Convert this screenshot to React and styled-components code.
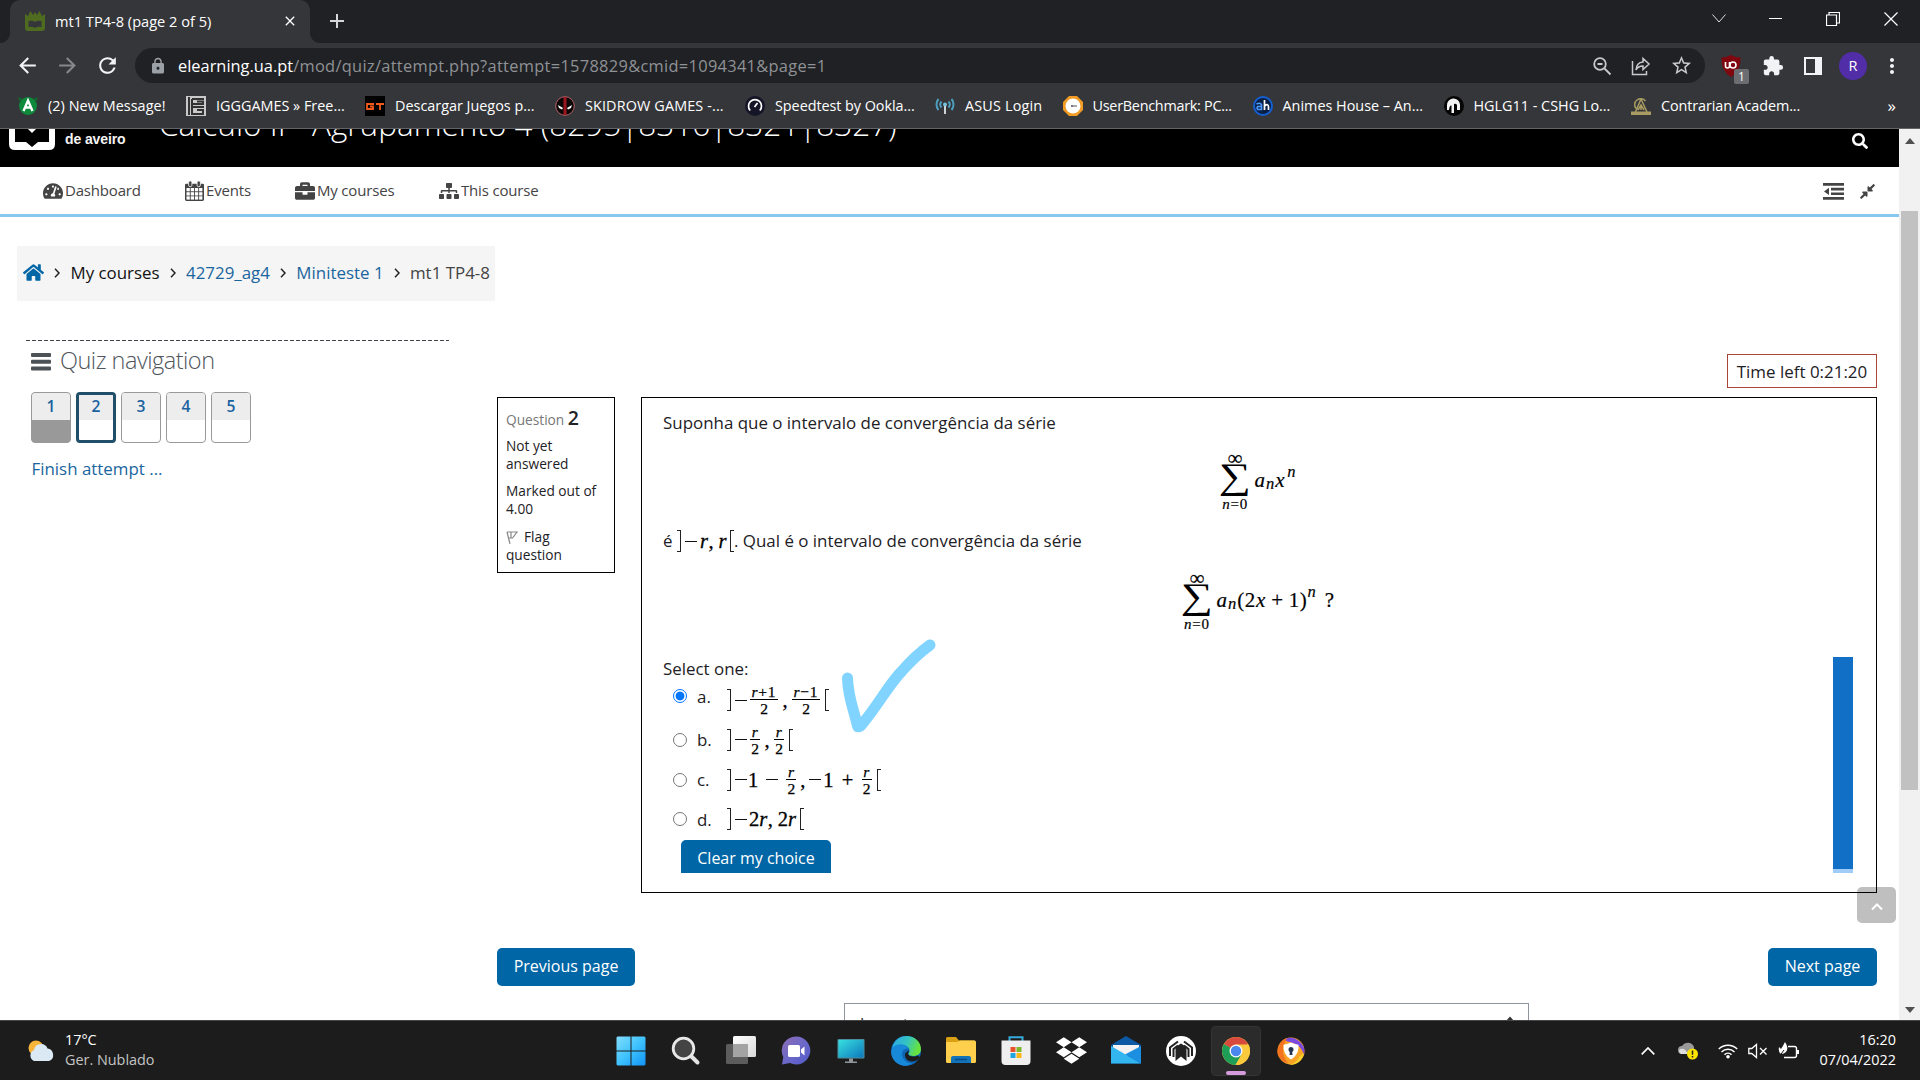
import React from "react";
import styled, { createGlobalStyle } from "styled-components";
import { FaTachometerAlt, FaBriefcase, FaSitemap, FaHome, FaCompressAlt, FaSearch, FaDropbox } from "react-icons/fa";
import { MdArrowBack, MdArrowForward, MdRefresh, MdLock, MdStarBorder, MdExtension, MdMoreVert, MdClose, MdAdd } from "react-icons/md";

const ui = `"Open Sans", "Noto Sans", sans-serif`;
const math = `"Liberation Serif", "DejaVu Serif", serif`;

const Global = createGlobalStyle`
  * { box-sizing: border-box; }
  html, body { margin: 0; padding: 0; overflow: hidden; background: #fff; }
  body { font-family: ${ui}; color: #1d2125; }
  svg { display: block; flex: none; }
`;

const Screen = styled.div`
  width: 1920px;
  height: 1080px;
  display: flex;
  flex-direction: column;
  overflow: hidden;
`;

/* ---------- browser chrome ---------- */
const TabStrip = styled.div`
  height: 43px;
  background: #202124;
  display: flex;
  align-items: stretch;
  flex: none;
`;
const CornerShape = styled.div`
  width: 10px;
  height: 10px;
  align-self: flex-end;
  background: radial-gradient(circle at ${(p) => (p.$right ? "100% 0" : "0 0")}, #202124 9.5px, #35363a 10.5px);
`;
const Tab = styled.div`
  width: 300px;
  background: #35363a;
  border-radius: 10px 10px 0 0;
  display: flex;
  align-items: center;
  padding: 0 12px 1px 15px;
  color: #fff;
`;
const TabTitle = styled.span`
  font-size: 14.6px;
  margin: -1px 0 0 10px;
  flex: 1;
  white-space: nowrap;
`;
const NewTab = styled.div`
  display: flex;
  align-items: center;
  padding: 0 0 1px 5px;
  color: #d5d7da;
`;
const WindowButtons = styled.div`
  margin-left: auto;
  display: flex;
  width: 230px;
  height: 37px;
  align-items: center;
`;
const WindowButton = styled.div`
  width: 57.3px;
  display: flex;
  justify-content: center;
`;
const Toolbar = styled.div`
  height: 45px;
  background: #35363a;
  display: flex;
  align-items: center;
  padding-left: 15px;
  color: #f1f3f4;
  flex: none;
`;
const ToolButton = styled.div`
  width: 40px;
  display: flex;
  color: ${(p) => (p.$dim ? "#85878a" : "#f1f3f4")};
`;
const AddressBar = styled.div`
  width: 1570px;
  height: 35px;
  border-radius: 18px;
  background: #202124;
  display: flex;
  align-items: center;
  padding: 0 12px 0 14px;
  color: #9aa0a6;
`;
const Url = styled.span`
  font-size: 16.4px;
  letter-spacing: ${(p) => (p.$host ? 0 : 0.31)}px;
  color: ${(p) => (p.$host ? "#fff" : "#8f9296")};
  margin-left: ${(p) => (p.$host ? "11px" : 0)};
`;
const AddressIcons = styled.div`
  margin-left: auto;
  display: flex;
  gap: 19px;
  align-items: center;
  color: #c6c9cd;
`;
const Extensions = styled.div`
  display: flex;
  align-items: center;
  margin-left: 15px;
`;
const Shield = styled.div`
  position: relative;
  width: 42px;
  height: 28px;
  padding: 3px 0 0 1px;
`;
const ShieldCount = styled.span`
  position: absolute;
  left: 14px;
  top: 17px;
  width: 15px;
  height: 15px;
  border-radius: 2px;
  background: #6b6d70;
  color: #fff;
  font-size: 12px;
  line-height: 15px;
  text-align: center;
`;
const ExtSlot = styled.div`
  width: ${(p) => p.$w}px;
  display: flex;
`;
const Avatar = styled.div`
  width: 28px;
  height: 28px;
  border-radius: 50%;
  background: #512da8;
  color: #fff;
  font-size: 14.5px;
  line-height: 27px;
  text-align: center;
  margin-right: 13px;
`;
const Bookmarks = styled.div`
  height: 41px;
  background: #35363a;
  border-bottom: 1px solid #636467;
  display: flex;
  align-items: center;
  padding: 0 0 5px 18px;
  flex: none;
`;
const Bookmark = styled.div`
  width: ${(p) => p.$w}px;
  display: flex;
  align-items: center;
  gap: 10px;
  font-size: 14.4px;
  line-height: 20px;
  letter-spacing: ${(p) => p.$ls || 0}px;
  white-space: nowrap;
  color: #fff;
`;
const More = styled.div`
  margin: 0 24px 0 auto;
  color: #fff;
  font-size: 17px;
  line-height: 20px;
`;

/* ---------- page ---------- */
const PageRow = styled.div`
  height: 891px;
  display: flex;
  flex: none;
`;
const Page = styled.div`
  width: 1899px;
  background: #fff;
  overflow: hidden;
  position: relative;
`;
const Scrollbar = styled.div`
  width: 21px;
  background: #f1f1f1;
  display: flex;
  flex-direction: column;
  align-items: center;
  justify-content: space-between;
  padding: 9px 0 7px;
`;
const Thumb = styled.div`
  width: 17px;
  height: 579px;
  margin: 67px 0 auto;
  background: #c1c1c1;
`;
const Header = styled.div`
  height: 38px;
  background: #000;
  display: flex;
  align-items: flex-start;
  color: #fff;
  overflow: hidden;
`;
const LogoText = styled.div`
  width: 104px;
  padding-left: 10px;
  margin-top: -17px;
  font: bold 14px/18px "Liberation Sans", sans-serif;
  letter-spacing: -0.1px;
  color: #f4f4f4;
`;
const CourseTitle = styled.div`
  font-size: 31.5px;
  font-weight: 300;
  line-height: 42px;
  margin-top: -26px;
  white-space: nowrap;
`;
const HeaderSearch = styled.div`
  margin: 4px 31px 0 auto;
`;
const Nav = styled.div`
  height: 50px;
  border-bottom: 3px solid #88c8ee;
  display: flex;
  align-items: center;
  padding: 1px 23px 0 43px;
  color: #444;
`;
const NavItem = styled.div`
  width: ${(p) => p.$w}px;
  display: flex;
  align-items: center;
  gap: 2px;
  font-size: 15px;
  line-height: 20px;
  letter-spacing: -0.18px;
  white-space: nowrap;
  span { margin-top: -2px; }
`;
const NavTools = styled.div`
  margin-left: auto;
  display: flex;
  gap: 15px;
  align-items: center;
`;
const Breadcrumb = styled.div`
  margin: 29px 0 0 17px;
  width: 478px;
  height: 55px;
  background: #f5f5f5;
  display: flex;
  align-items: center;
  padding: 0 5px 2px 6px;
  font-size: 16.9px;
  justify-content: space-between;
  white-space: nowrap;
`;
const Crumb = styled.span`
  color: ${(p) => (p.$link ? "#1a659e" : p.$muted ? "#444" : "#111")};
`;
const Columns = styled.div`
  display: flex;
  align-items: flex-start;
`;
const Side = styled.div`
  width: 423px;
  margin: 39px 48px 0 26px;
`;
const Dashes = styled.div`
  height: 1px;
  background: repeating-linear-gradient(90deg, #3f444a 0 4px, transparent 4px 6px);
`;
const SideTitle = styled.div`
  display: flex;
  align-items: center;
  gap: 9px;
  height: 40px;
  padding: 1px 0 0 5px;
  font-size: 23.5px;
  line-height: 32px;
  font-weight: 300;
  letter-spacing: -0.5px;
  color: #50565c;
  span { margin-top: -4px; }
`;
const Steps = styled.div`
  display: flex;
  gap: 5px;
  margin: 11px 0 0 5px;
`;
const Step = styled.div`
  width: 40px;
  height: 51px;
  border: ${(p) => (p.$current ? "3px solid #214e68" : "1px solid #999")};
  border-radius: 4px;
  overflow: hidden;
  background: ${(p) => (p.$done ? "#999" : "#fff")};
`;
const StepNumber = styled.div`
  height: ${(p) => (p.$current ? 25 : 27)}px;
  line-height: ${(p) => (p.$current ? 22 : 26)}px;
  background: #ededed;
  text-align: center;
  font-weight: 600;
  font-size: 15.6px;
  color: #1a62a0;
`;
const Finish = styled.div`
  margin: 14px 0 0 5.5px;
  font-size: 16.9px;
  line-height: 24px;
  color: #1a659e;
`;
const Main = styled.div`
  width: 1380px;
  display: flex;
  flex-direction: column;
  padding-top: 53px;
`;
const Timer = styled.div`
  align-self: flex-end;
  width: 150px;
  height: 34px;
  border: 1px solid #a94438;
  text-align: center;
  font-size: 16.95px;
  line-height: 34px;
  color: #1d2125;
`;
const Question = styled.div`
  margin-top: 9px;
  display: flex;
  align-items: flex-start;
  justify-content: space-between;
`;
const Info = styled.div`
  width: 118px;
  height: 176px;
  border: 1px solid #000;
  padding: 7px 8px 0;
  font-size: 13.7px;
  line-height: 18px;
  color: #1d2125;
`;
const InfoTitle = styled.div`
  height: 26px;
  line-height: 26px;
  color: #777;
  font-size: 13.7px;
  b { font-size: 19.5px; font-weight: 600; color: #222; }
`;
const InfoText = styled.div`
  margin: ${(p) => p.$top}px 0 0;
  svg { display: inline-block; margin-right: 4px; vertical-align: -3px; }
`;
const Sheet = styled.div`
  width: 1236px;
  height: 496px;
  border: 1px solid #000;
  padding: 13px 21px 0;
  position: relative;
  font-size: 16.92px;
`;
const Line = styled.div`
  height: 24px;
  line-height: 24px;
  display: flex;
  flex: none;
  white-space: pre;
`;
const Display = styled.div`
  height: ${(p) => p.$h}px;
  padding-top: ${(p) => p.$top}px;
  display: flex;
  justify-content: center;
  align-items: flex-start;
  font-family: ${math};
  color: #000;
`;
const Sum = styled.div`
  width: 27px;
  margin-right: 6px;
  display: flex;
  flex-direction: column;
  align-items: center;
  white-space: nowrap;
`;
const SumLimit = styled.div`
  height: 14px;
  line-height: 14px;
  letter-spacing: ${(p) => (p.$inf ? 0 : 0.8)}px;
  font-size: ${(p) => (p.$inf ? 21 : 15)}px;
  -webkit-text-stroke: 0.2px #000;
`;
const Sigma = styled.div`
  height: 32px;
  line-height: 22px;
  font-size: 36px;
  font-family: "Liberation Serif", serif;
  transform: scaleX(1.25);
`;
const Term = styled.div`
  margin-top: 15px;
  height: 28px;
  line-height: 28px;
  font-size: 21px;
  letter-spacing: 0.6px;
  display: flex;
  white-space: pre;
  -webkit-text-stroke: 0.2px #000;
`;
const V = styled.i`
  font-family: ${math};
  letter-spacing: ${(p) => p.$ls ?? 0.5}px;
`;
const Script = styled.i`
  font-size: 16.5px;
  letter-spacing: 1px;
  position: relative;
  top: ${(p) => (p.$up ? -8 : 4)}px;
`;
const Gap = styled.span`
  width: ${(p) => p.$w}px;
  flex: none;
`;
const AnswerArea = styled.div`
  height: 216px;
  width: 1190px;
  display: flex;
  justify-content: space-between;
  overflow: hidden;
`;
const Choices = styled.div`
  display: flex;
  flex-direction: column;
`;
const Marker = styled.div`
  width: 20px;
  background: linear-gradient(#116fc6 0 212px, #a0cdf8 212px);
`;
const Choice = styled.div`
  height: ${(p) => p.$h}px;
  padding-left: 10px;
  display: flex;
  flex: none;
  align-items: center;
`;
const Radio = styled.span`
  width: 14px;
  height: 14px;
  border-radius: 50%;
  border: 1px solid ${(p) => (p.$on ? "#0075ff" : "#767676")};
  background: ${(p) => (p.$on ? "radial-gradient(circle, #0075ff 4px, #fff 4.8px)" : "#fff")};
  margin-top: ${(p) => p.$y || 0}px;
`;
const Letter = styled.span`
  width: 40px;
  padding-left: 10px;
  margin-top: ${(p) => p.$y || 0}px;
`;
const Formula = styled.span`
  font-family: ${math};
  font-size: 20.5px;
  line-height: 24px;
  height: 24px;
  display: flex;
  align-items: center;
  color: #000;
  -webkit-text-stroke: 0.3px #000;
`;
const Bracket = styled.span`
  width: 4px;
  height: 22px;
  border: 1px solid #222;
  border-${(p) => (p.$open ? "right" : "left")}: 0;
  flex: none;
`;
const Op = styled.span`
  width: ${(p) => p.$w || 13}px;
  text-align: center;
  flex: none;
`;
const Minus = styled.span`
  width: 12px;
  height: 1px;
  background: #111;
  margin: 0 ${(p) => p.$r ?? 3}px 0 ${(p) => p.$l ?? 4}px;
  flex: none;
`;
const Fraction = styled.span`
  display: flex;
  flex-direction: column;
  align-items: center;
  width: ${(p) => p.$w}px;
  font-size: 15.5px;
  line-height: 13px;
  height: 30px;
  flex: none;
  -webkit-text-stroke: 0.25px #000;
  span { height: 14px; white-space: nowrap; letter-spacing: 0.9px; }
  span + span { border-top: 1px solid #000; width: 100%; text-align: center; height: 16px; line-height: 17px; letter-spacing: 0; }
`;
const Button = styled.div`
  width: ${(p) => p.$w}px;
  height: 38px;
  border-radius: 5px;
  background: #0066a6;
  color: #fff;
  font-size: 16px;
  line-height: 37px;
  text-align: center;
  flex: none;
`;
const ClearWrap = styled.div`
  padding: 1px 0 0 18px;
  flex: none;
`;
const Pager = styled.div`
  margin-top: 55px;
  display: flex;
  justify-content: space-between;
`;
const Jump = styled.div`
  margin: 17px 0 0 347px;
  width: 685px;
  height: 40px;
  border: 1px solid #8f959e;
  padding: 8px 13px 0 15px;
  display: flex;
  justify-content: space-between;
  font-size: 16px;
  line-height: 24px;
  color: #333;
`;
const CheckStroke = styled.svg`
  position: absolute;
  left: 835px;
  top: 506px;
`;
const ToTop = styled.div`
  position: absolute;
  left: 1857px;
  top: 758px;
  width: 39px;
  height: 36px;
  padding-top: 4px;
  border-radius: 5px;
  background: rgba(0, 0, 0, 0.25);
  display: flex;
  align-items: center;
  justify-content: center;
`;

/* ---------- taskbar ---------- */
const Taskbar = styled.div`
  height: 60px;
  background: #1c1c1c;
  border-top: 1px solid #454545;
  display: flex;
  align-items: center;
  flex: none;
  color: #fff;
`;
const Weather = styled.div`
  width: 606px;
  padding-left: 28px;
  display: flex;
  align-items: center;
  gap: 10px;
  font-size: 14.4px;
  line-height: 20px;
`;
const WeatherText = styled.div`
  margin-top: -2px;
`;
const Dim = styled.div`
  color: #c4c4c4;
`;
const AppSlot = styled.div`
  width: 50px;
  height: 50px;
  margin-right: 5px;
  border-radius: 5px;
  display: flex;
  align-items: center;
  justify-content: center;
  position: relative;
  background: ${(p) => (p.$active ? "#2b2b2b" : "transparent")};
  box-shadow: ${(p) => (p.$active ? "inset 0 0 0 1px #353535" : "none")};
`;
const ActiveBar = styled.div`
  position: absolute;
  left: 15px;
  bottom: 1px;
  width: 20px;
  height: 4px;
  border-radius: 2px;
  background: #d69bdc;
`;
const Tray = styled.div`
  margin-left: auto;
  display: flex;
  align-items: center;
`;
const TraySlot = styled.div`
  width: ${(p) => p.$w}px;
`;
const Clock = styled.div`
  width: 120px;
  padding: 0 24px 2px 0;
  font-size: 14.4px;
  line-height: 20px;
  white-space: nowrap;
  display: flex;
  flex-direction: column;
  align-items: flex-end;
`;

const Calendar = () => (
  <svg width="19" height="20" viewBox="0 0 19 20">
    <path fill="#444" d="M1.4 2.7h16.2q1.4 0 1.4 1.4v14.500q0 1.400-1.400 1.400H1.400Q0 20 0 18.600V4.100Q0 2.700 1.400 2.700z" />
    <g fill="#444" stroke="#fff" strokeWidth=".8"><rect x="3.600" y="0" width="3.300" height="5.600" rx="1.400" /><rect x="12.100" y="0" width="3.300" height="5.600" rx="1.400" /></g>
    {[7, 11.2, 15.3].map((y) => [1.5, 5.7, 9.9, 14.1].map((x) => <rect key={`${x}-${y}`} x={x} y={y} width="3.300" height="3.300" fill="#fff" />))}
  </svg>
);
const Outdent = () => (
  <svg width="21" height="17" viewBox="0 0 21 17"><path fill="#444" d="M0 0h21v2.800H0zM8 4.700h13v2.700H8zM8 9.400h13v2.700H8zM0 14h21v2.800H0zM6 4.700v7.400L1 8.400z" /></svg>
);
const Chevron = () => (
  <svg width="6" height="10" viewBox="0 0 6 10"><path d="M1 .8L5 5 1 9.200" fill="none" stroke="#222" strokeWidth="1.500" /></svg>
);

const favicons = [
  <svg width="20" height="20" viewBox="0 0 20 20"><circle cx="10" cy="10" r="9" fill="#0f8a3c" /><path d="M0 1l5 2-3 3zM20 1l-5 2 3 3z" fill="#0f6a30" /><path d="M5.500 15L10 4.500 14.500 15M7.500 11.500h5" fill="none" stroke="#fff" strokeWidth="2.400" /></svg>,
  <svg width="20" height="20" viewBox="0 0 20 20"><rect width="20" height="20" fill="#c9c9c9" /><path d="M3 1v18M6 3h12M6 3v5h11V5.500h-6M6 11h12M6 11v7h11v-4h-6M6 8v3" fill="none" stroke="#333" strokeWidth="2" /></svg>,
  <svg width="20" height="20" viewBox="0 0 20 20"><rect width="20" height="20" fill="#000" /><path d="M9 8H2v5h6v-2.500H5M11 8h8M15 8v6" fill="none" stroke="#f05a1a" strokeWidth="1.800" /></svg>,
  <svg width="20" height="20" viewBox="0 0 20 20"><circle cx="10" cy="10" r="9.300" fill="#0d0808" stroke="#b8606a" strokeWidth="1" /><path d="M10 1v18" stroke="#9a1620" strokeWidth="3" /><path d="M3 9l5 3-1 1.500L4 12zM17 9l-5 3 1 1.500L16 12z" fill="#fff" /></svg>,
  <svg width="20" height="20" viewBox="0 0 20 20"><circle cx="10" cy="10" r="10" fill="#141526" /><path d="M5.200 14.500a6.500 6.500 0 1 1 9.600 0M9.500 11l3-4" fill="none" stroke="#fff" strokeWidth="1.700" /></svg>,
  <svg width="20" height="20" viewBox="0 0 20 20"><g fill="none" stroke="#4f9dbd" strokeWidth="2"><path d="M6.500 11.500a4.500 4.500 0 0 1 0-6M13.500 11.500a4.500 4.500 0 0 0 0-6M3.500 14a8.500 8.500 0 0 1 0-11M16.500 14a8.500 8.500 0 0 0 0-11" /></g><circle cx="10" cy="8.500" r="2" fill="#7ac1dc" /><path d="M10 10v8" stroke="#c9d3d8" strokeWidth="2" /></svg>,
  <svg width="20" height="20" viewBox="0 0 20 20"><path d="M6 0h8l6 6v8l-6 6H6l-6-6V6z" fill="#f19a24" /><circle cx="10" cy="10" r="7.500" fill="#fff" /><path d="M8 10h6M9 9v2" stroke="#555" strokeWidth="1.200" /></svg>,
  <svg width="20" height="20" viewBox="0 0 20 20"><circle cx="10" cy="10" r="9" fill="#0b1f44" stroke="#155fd0" strokeWidth="2" /><path d="M3.500 8q4-2 5 1v4.500H5q-2-1.500 0-3h3" fill="none" stroke="#4e9bff" strokeWidth="1.600" /><path d="M11.500 4v10M11.500 10q4-3 4 1v3" fill="none" stroke="#fff" strokeWidth="1.700" /></svg>,
  <svg width="20" height="20" viewBox="0 0 20 20"><circle cx="10" cy="10" r="10" fill="#050505" /><path d="M3 14V9.500a6.500 6.500 0 0 1 13-1V14h-3V9q-1-2-3-1v9H7.500V9.500Q5.500 9 5 14z" fill="#f4f4f4" /></svg>,
  <svg width="20" height="20" viewBox="0 0 20 20"><path d="M14.500 5A6 6 0 1 0 5 12.500M10 3l6 13M10 3L4.500 16M10 9v5M7 14l3-5 3 5" fill="none" stroke="#a89c62" strokeWidth="1.500" /><path d="M0 15.500h20V19H0z" fill="#a89c62" /></svg>,
];
const bookmarks = [
  ["(2) New Message!", 168, 0.05],
  ["IGGGAMES » Free...", 179, 0],
  ["Descargar Juegos p...", 190, 0],
  ["SKIDROW GAMES -...", 190, 0.13],
  ["Speedtest by Ookla...", 190, -0.05],
  ["ASUS Login", 127.5, 0.17],
  ["UserBenchmark: PC...", 190, -0.26],
  ["Animes House – An...", 191, 0],
  ["HGLG11 - CSHG Lo...", 187.5, 0],
  ["Contrarian Academ...", 170, -0.1],
];

const Frac = ({ w, a, b = "2" }) => (
  <Fraction $w={w}><span>{a}</span><span>{b}</span></Fraction>
);
const SumSign = () => (
  <Sum><SumLimit $inf>∞</SumLimit><Sigma>∑</Sigma><SumLimit><i>n</i>=0</SumLimit></Sum>
);

const WindowsIcon = () => (
  <svg width="30" height="30" viewBox="0 0 30 30">
    <defs><linearGradient id="win" x1="0" y1="0" x2="1" y2="1"><stop offset="0" stopColor="#83deff" /><stop offset=".5" stopColor="#3fc2fd" /><stop offset="1" stopColor="#1193f5" /></linearGradient></defs>
    <path fill="url(#win)" d="M1.500.5H14.500V14.500H.5V1.500zM15.500.5h13l1 1v13h-14zM.5 15.500h14v14h-13l-1-1zM15.500 15.500h14v13l-1 1h-13z" />
  </svg>
);
const SearchIcon = () => (
  <svg width="30" height="30" viewBox="0 0 30 30"><path d="M19.500 19.500l7 7" stroke="#e3e3e3" strokeWidth="4" strokeLinecap="round" /><circle cx="12.500" cy="12.500" r="10.300" fill="#444" stroke="#e8e8e8" strokeWidth="2.800" /></svg>
);
const TaskViewIcon = () => (
  <svg width="30" height="30" viewBox="0 0 30 30"><defs><linearGradient id="tv" x1="0" y1="0" x2="1" y2="1"><stop offset="0" stopColor="#fff" /><stop offset="1" stopColor="#d9d9d9" /></linearGradient></defs><rect y="8" width="22" height="20" rx="1.500" fill="#5c5c5c" /><rect x="7" y="0" width="23" height="21" rx="1.500" fill="url(#tv)" /><path d="M7 8h15v13H8.500L7 19.500z" fill="#a3a3a3" /></svg>
);
const ChatIcon = () => (
  <svg width="30" height="30" viewBox="0 0 30 30"><defs><linearGradient id="ch" x1="0" y1="0" x2="1" y2="1"><stop offset="0" stopColor="#8d6bb2" /><stop offset=".5" stopColor="#6d69c9" /><stop offset="1" stopColor="#5059c9" /></linearGradient></defs><path d="M15 .5a14 14 0 1 1-6 26.500L1 28.500 2.300 21A14 14 0 0 1 15 .5z" fill="url(#ch)" /><rect x="7" y="9" width="12" height="12" rx="1.500" fill="#fff" /><path d="M20 13.500l3.500-3v9l-3.500-3z" fill="#fff" /></svg>
);
const MonitorIcon = () => (
  <svg width="30" height="30" viewBox="0 0 30 30"><defs><linearGradient id="mo" x1="0" y1="0" x2="1" y2="1"><stop offset="0" stopColor="#38e0e0" /><stop offset="1" stopColor="#0d78bd" /></linearGradient></defs><rect x="1.500" y="3" width="27" height="19.500" rx="1" fill="#4a8f9f" /><rect x="2.500" y="4" width="25" height="17.500" fill="url(#mo)" /><path d="M13 22.500h4v3h4V27H9v-1.500h4z" fill="#8f9598" /></svg>
);
const EdgeIcon = () => (
  <svg width="30" height="30" viewBox="0 0 30 30"><defs><linearGradient id="e1" x1="0" y1="0" x2="1" y2=".3"><stop offset="0" stopColor="#2ba6e8" /><stop offset=".55" stopColor="#33c3c4" /><stop offset="1" stopColor="#67e23e" /></linearGradient></defs>
    <circle cx="15" cy="15" r="15" fill="#0e66b4" /><path d="M1 12.500C3 4 9 0 15.500 0 24 0 30 6 30 13c0 5-4 7-7.500 7-3 0-5-1-5-2 0-1 1.500-1.500 1-4C18 11 15 9.500 12 9 7 8.500 3 10 1 12.500z" fill="url(#e1)" /><path d="M.2 16C0 11 6 7 12 8.500c3 .8 5 2.500 5 4.500-4-1-7 3-5.500 7.500 1.500 4.800 6 7 9.500 6.500-2 2-5 3-8 2.700C6 29 .5 23.500.2 16z" fill="#1789d8" /><path d="M18 14.500c-.5 2.500-1.500 2.500-.5 4.500 2 1.800 7 2 9.500.5l2 1.500c-2 3.500-6 5-9 4.500-5-1-7-5.500-5.500-8.500z" fill="#1c1c1c" /></svg>
);
const FolderIcon = () => (
  <svg width="30" height="30" viewBox="0 0 30 30"><path d="M0 2.500Q0 1 1.500 1H10l3 3.500h15.500V12H0z" fill="#d9a013" /><path d="M0 6h11l3-1.500h14.500Q30 4.500 30 6v19.500q0 1.500-1.500 1.500h-27Q0 27 0 25.500z" fill="#fdcf4c" /><path d="M5 27v-5q0-2 2-2h16q2 0 2 2v5z" fill="#1273b9" /><path d="M9 23.500h12" stroke="#0a4a86" strokeWidth="1.500" /></svg>
);
const StoreIcon = () => (
  <svg width="30" height="30" viewBox="0 0 30 30"><path d="M8.500 7V1.200h13V7" fill="none" stroke="#35a9da" strokeWidth="2" /><path d="M.5 4.500h29V25q0 4-4 4h-21q-4 0-4-4z" fill="#efefef" /><path d="M9.500 11h5v5h-5z" fill="#e8512b" /><path d="M15.500 11h5v5h-5z" fill="#7fb82a" /><path d="M9.500 17h5v5h-5z" fill="#1ea4e0" /><path d="M15.500 17h5v5h-5z" fill="#f9b816" /></svg>
);
const MailIcon = () => (
  <svg width="30" height="30" viewBox="0 0 30 30"><path d="M0 9L15 0l15 9v18.500H0z" fill="#0c59a4" /><path d="M2 9h26v6L15 21 2 15z" fill="#f3f3f3" /><path d="M0 10l30 17.500H0z" fill="#33b5f0" /><path d="M30 10L14 18.500 30 27.500z" fill="#1c8fe0" /></svg>
);
const RoundIcon = () => (
  <svg width="30" height="30" viewBox="0 0 30 30"><circle cx="15" cy="15" r="15" fill="#fff" /><g fill="none" stroke="#222" strokeWidth="2"><path d="M4 20v-8.500L12 5.500M26 20v-8.500L18 5.500" /><path d="M7.500 21v-8L12 9.500M22.500 21v-8L18 9.500" /></g><path d="M15 7.500l5.500 3.500v14L15 20.500 9.500 25V11z" fill="#222" /></svg>
);
const ChromeIcon = () => (
  <svg width="28" height="28" viewBox="0 0 28 28"><circle cx="14" cy="14" r="14" fill="#fbc93c" /><path d="M14 14L1.900 7A14 14 0 0 1 26.100 7z" fill="#d84a3e" /><path d="M14 14L1.900 7A14 14 0 0 0 13.500 28L20 17.500z" fill="#1f9e57" /><path d="M14 7.500h12.400A14 14 0 0 1 13.500 28l6.200-11z" fill="#fbc93c" /><circle cx="14" cy="14" r="6.500" fill="#fff" /><circle cx="14" cy="14" r="5.200" fill="#4a87ee" /></svg>
);
const ShieldRound = () => (
  <svg width="28" height="28" viewBox="0 0 28 28"><circle cx="14" cy="14" r="13.500" fill="#f9a326" /><path d="M7 2.500A14 14 0 0 1 27 18q-3-10-11-12T7 2.500z" fill="#7a4ae0" /><path d="M1 18A14 14 0 0 1 10 1q-4 7-4 13t5 12Q4 25 1 18z" fill="#f4731f" /><path d="M27 16a14 14 0 0 1-15 12q8-2 11-9z" fill="#f6d02c" /><path d="M14 5.500q4 2 7.500 2.200 1 9.300-7.500 14.800Q5.500 17 6.500 7.700 10 7.500 14 5.500z" fill="#fff" /><circle cx="14" cy="12.500" r="2.500" fill="#23344f" /><path d="M13 13h2l.500 5h-3z" fill="#23344f" /></svg>
);
const apps = [WindowsIcon, SearchIcon, TaskViewIcon, ChatIcon, MonitorIcon, EdgeIcon, FolderIcon, StoreIcon, null, MailIcon, RoundIcon, ChromeIcon, ShieldRound];

export default function App() {
  return (
    <Screen>
      <Global />
      <TabStrip>
        <CornerShape />
        <Tab>
          <svg width="20" height="20" viewBox="0 0 20 20"><path d="M0 3l3 2 2.500-5L8 4l2-3 2 3 2.500-4L17 5l3-2v14q0 3-3 3H3q-3 0-3-3z" fill="#4f6b20" /><path d="M3.500 10q4-1 6.500 1 2.500-2 6.500-1v6q-4-1-6.500 1-2.500-2-6.500-1z" fill="#35363a" /></svg>
          <TabTitle>mt1 TP4-8 (page 2 of 5)</TabTitle>
          <MdClose size={16} />
        </Tab>
        <CornerShape $right />
        <NewTab><MdAdd size={24} /></NewTab>
        <WindowButtons>
          <WindowButton><svg width="14" height="9" viewBox="0 0 14 9"><path d="M.5.5L7 8 13.500.5" fill="none" stroke="#ddd" /></svg></WindowButton>
          <WindowButton><svg width="13" height="1"><rect width="13" height="1" fill="#fff" /></svg></WindowButton>
          <WindowButton><svg width="14" height="14" viewBox="0 0 14 14"><path d="M.5 3h10v10.500H.5zM3 3V.5h10.500V11H11" fill="none" stroke="#fff" strokeWidth="1.200" /></svg></WindowButton>
          <WindowButton><svg width="14" height="14" viewBox="0 0 14 14"><path d="M.5.5l13 13M13.500.5l-13 13" stroke="#fff" strokeWidth="1.200" /></svg></WindowButton>
        </WindowButtons>
      </TabStrip>
      <Toolbar>
        <ToolButton><MdArrowBack size={25} /></ToolButton>
        <ToolButton $dim><MdArrowForward size={25} /></ToolButton>
        <ToolButton><MdRefresh size={25} /></ToolButton>
        <AddressBar>
          <MdLock size={18} />
          <Url $host>elearning.ua.pt</Url>
          <Url>/mod/quiz/attempt.php?attempt=1578829&cmid=1094341&page=1</Url>
          <AddressIcons>
            <svg width="20" height="20" viewBox="0 0 20 20"><g fill="none" stroke="currentColor" strokeWidth="1.800"><circle cx="8" cy="8" r="5.800" /><path d="M12.500 12.500l6 6M5.500 8h5" /></g></svg>
            <svg width="20" height="20" viewBox="0 0 20 20"><g fill="none" stroke="currentColor" strokeWidth="1.500"><path d="M1.500 5v13.500h14V15" /><path d="M5 14q.5-7.500 7-8V2.500l6 5.500-6 5.500V10q-5 0-7 4z" /></g></svg>
            <MdStarBorder size={23} />
          </AddressIcons>
        </AddressBar>
        <Extensions>
          <Shield>
            <svg width="20" height="22" viewBox="0 0 20 22"><path d="M10 0q5 2.500 9.500 2.500Q20 16 10 22 0 16 .5 2.500 5 2.500 10 0z" fill="#800610" /><path d="M4.500 7v4q0 2 2 2t2-2V7M9 10a3 3 0 1 0 6 0 3 3 0 1 0-6 0" fill="none" stroke="#fff" strokeWidth="1.600" /></svg>
            <ShieldCount>1</ShieldCount>
          </Shield>
          <ExtSlot $w={42}><MdExtension size={22} /></ExtSlot>
          <ExtSlot $w={35}><svg width="18" height="18" viewBox="0 0 18 18"><rect x="1" y="1" width="16" height="16" fill="none" stroke="#f1f3f4" strokeWidth="2" /><path d="M11 1h6v16h-6z" fill="#f1f3f4" /></svg></ExtSlot>
          <Avatar>R</Avatar>
          <MdMoreVert size={24} />
        </Extensions>
      </Toolbar>
      <Bookmarks>
        {bookmarks.map(([name, w, ls], i) => (
          <Bookmark key={name} $w={w} $ls={ls}>{favicons[i]}{name}</Bookmark>
        ))}
        <More>»</More>
      </Bookmarks>

      <PageRow>
        <Page>
          <Header>
            <svg width="55" height="22" viewBox="0 0 55 22"><path d="M9 0h46v15q0 6-6 6H15q-6 0-6-6z" fill="#fff" /><path d="M15 0h13l4 4 4-4h13v13H38l-6 5-6-5H15z" fill="#000" /></svg>
            <LogoText>universidade de aveiro</LogoText>
            <CourseTitle>Cálculo II - Agrupamento 4 (8295|8316|8321|8327)</CourseTitle>
            <HeaderSearch><FaSearch size={16} /></HeaderSearch>
          </Header>
          <Nav>
            <NavItem $w={142}><FaTachometerAlt size={20} /><span>Dashboard</span></NavItem>
            <NavItem $w={110}><Calendar /><span>Events</span></NavItem>
            <NavItem $w={144}><FaBriefcase size={20} /><span>My courses</span></NavItem>
            <NavItem $w={110}><FaSitemap size={20} /><span>This course</span></NavItem>
            <NavTools><Outdent /><FaCompressAlt size={17} /></NavTools>
          </Nav>
          <Breadcrumb>
            <FaHome size={21} color="#0066a6" />
            <Chevron /><Crumb>My courses</Crumb>
            <Chevron /><Crumb $link>42729_ag4</Crumb>
            <Chevron /><Crumb $link>Miniteste 1</Crumb>
            <Chevron /><Crumb $muted>mt1 TP4-8</Crumb>
          </Breadcrumb>
          <Columns>
            <Side>
              <Dashes />
              <SideTitle>
                <svg width="20" height="18" viewBox="0 0 20 18"><g fill="#4d5257"><rect width="20" height="4" rx="1" /><rect y="6.700" width="20" height="4" rx="1" /><rect y="13.400" width="20" height="4" rx="1" /></g></svg>
                <span>Quiz navigation</span>
              </SideTitle>
              <Steps>
                {[1, 2, 3, 4, 5].map((n) => (
                  <Step key={n} $done={n === 1} $current={n === 2}><StepNumber $current={n === 2}>{n}</StepNumber></Step>
                ))}
              </Steps>
              <Finish>Finish attempt ...</Finish>
            </Side>
            <Main>
              <Timer>Time left 0:21:20</Timer>
              <Question>
                <Info>
                  <InfoTitle>Question <b>2</b></InfoTitle>
                  <InfoText $top={6}>Not yet<br />answered</InfoText>
                  <InfoText $top={9}>Marked out of<br />4.00</InfoText>
                  <InfoText $top={10}>
                    <svg width="14" height="14" viewBox="0 0 14 14"><path d="M1 1h10L6.500 7H3M1 1l3 12M5 1.500v5" fill="none" stroke="#888" strokeWidth="1.200" /></svg>
                    Flag<br />question
                  </InfoText>
                </Info>
                <Sheet>
                  <Line>Suponha que o intervalo de convergência da série</Line>
                  <Display $h={94} $top={16}>
                    <SumSign />
                    <Term><V $ls={1}>a</V><Script>n</Script><V $ls={2.5}>x</V><Script $up>n</Script></Term>
                  </Display>
                  <Line>
                    {"é "}
                    <Formula><Bracket /><Minus /><V>r</V>,<Gap $w={5} /><V>r</V><Gap $w={3} /><Bracket $open /></Formula>
                    . Qual é o intervalo de convergência da série
                  </Line>
                  <Display $h={104} $top={18}>
                    <SumSign />
                    <Term><V $ls={1}>a</V><Script>n</Script>(2<V $ls={1}>x</V><Gap $w={5} />+<Gap $w={5} />1)<Script $up>n</Script><Gap $w={8} />?</Term>
                  </Display>
                  <AnswerArea>
                    <Choices>
                      <Line>Select one:</Line>
                      <Choice $h={38}><Radio $on $y={-8} /><Letter $y={-8}>a.</Letter><Formula><Bracket /><Minus /><Frac w={28} a={<><V>r</V>+1</>} /><Op $w={14}>,</Op><Frac w={28} a={<><V>r</V>−1</>} /><Gap $w={5} /><Bracket $open /></Formula></Choice>
                      <Choice $h={41}><Radio /><Letter>b.</Letter><Formula><Bracket /><Minus /><Frac w={10} a={<V>r</V>} /><Op $w={14}>,</Op><Frac w={10} a={<V>r</V>} /><Gap $w={5} /><Bracket $open /></Formula></Choice>
                      <Choice $h={39}><Radio /><Letter>c.</Letter><Formula><Bracket /><Minus $r={1} />1<Minus $l={8} $r={8} /><Frac w={10} a={<V>r</V>} /><Op $w={13}>,</Op><Minus $l={0} $r={2} />1<Op $w={28}>+</Op><Frac w={10} a={<V>r</V>} /><Gap $w={5} /><Bracket $open /></Formula></Choice>
                      <Choice $h={40}><Radio /><Letter>d.</Letter><Formula><Bracket /><Minus $r={2} />2<V>r</V>,<Gap $w={5} />2<V>r</V><Gap $w={3} /><Bracket $open /></Formula></Choice>
                      <ClearWrap><Button $w={150}>Clear my choice</Button></ClearWrap>
                    </Choices>
                    <Marker />
                  </AnswerArea>
                </Sheet>
              </Question>
              <Pager><Button $w={138}>Previous page</Button><Button $w={109}>Next page</Button></Pager>
              <Jump>Jump to...<svg width="10" height="20" viewBox="0 0 10 20"><path d="M0 10l5-5.500L10 10z" fill="#333" /></svg></Jump>
            </Main>
          </Columns>
          <CheckStroke width="110" height="110" viewBox="835 635 110 110">
            <path d="M847.500 678C848 697 853 707 857 724Q858 730 863 723C879 704 889 684 902 671Q915 656 930 645" fill="none" stroke="#80d4ff" strokeWidth="11" strokeLinecap="round" strokeLinejoin="round" />
          </CheckStroke>
          <ToTop><svg width="12" height="8" viewBox="0 0 12 8"><path d="M1 6.500l5-5 5 5" fill="none" stroke="#fff" strokeWidth="2" /></svg></ToTop>
        </Page>
        <Scrollbar>
          <svg width="10" height="6"><path d="M0 6l5-6 5 6z" fill="#505050" /></svg>
          <Thumb />
          <svg width="10" height="6"><path d="M0 0l5 6 5-6z" fill="#505050" /></svg>
        </Scrollbar>
      </PageRow>

      <Taskbar>
        <Weather>
          <svg width="27" height="24" viewBox="0 0 27 24"><circle cx="8" cy="9" r="7.500" fill="#f6b53a" /><path d="M6 22a6 6 0 0 1 0-11q1-6 7-6 5 0 6.500 4.500A6.500 6.500 0 0 1 21 22z" fill="#dbe9f4" /></svg>
          <WeatherText>17°C<Dim>Ger. Nublado</Dim></WeatherText>
        </Weather>
        {apps.map((Icon, i) => (
          <AppSlot key={i} $active={i === 11}>
            {Icon ? <Icon /> : <FaDropbox size={31} />}
            {i === 11 && <ActiveBar />}
          </AppSlot>
        ))}
        <Tray>
          <TraySlot $w={37}><svg width="14" height="8" viewBox="0 0 14 8"><path d="M.7 7.300L7 1l6.300 6.300" fill="none" stroke="#fff" strokeWidth="1.700" /></svg></TraySlot>
          <TraySlot $w={40}><svg width="20" height="18" viewBox="0 0 20 18"><path d="M4 12a4 4 0 0 1 0-8q3-4 8-3 5 2 4 7v4z" fill="#999" /><path d="M1 8q5-4 9 4H3q-2-1-2-4z" fill="#ddd" /><circle cx="14.500" cy="12" r="5.500" fill="#fde300" /><path d="M14.500 8.500v4.200M14.500 14v1.500" stroke="#222" strokeWidth="1.500" /></svg></TraySlot>
          <TraySlot $w={30}><svg width="20" height="16" viewBox="0 0 20 16"><g fill="none" stroke="#fff" strokeWidth="1.500"><path d="M.8 6a13 13 0 0 1 18.400 0M3.500 9a9.200 9.200 0 0 1 13 0M6.500 11.700a5 5 0 0 1 7 0" /></g><circle cx="10" cy="13.700" r="1.800" fill="#fff" /></svg></TraySlot>
          <TraySlot $w={30}><svg width="20" height="16" viewBox="0 0 20 16"><g fill="none" stroke="#fff" strokeWidth="1.300"><path d="M.8 5.500h3L8.500 1.500v13L3.800 10.500h-3z" /><path d="M12 5l6.500 6.500M18.500 5L12 11.500" /></g></svg></TraySlot>
          <TraySlot $w={22}><svg width="21" height="18" viewBox="0 0 21 18"><path d="M10 4.500h6.500q2 0 2 2v7q0 2-2 2H6" fill="none" stroke="#fff" strokeWidth="1.400" /><path d="M19 8h2v4h-2z" fill="#fff" /><path d="M7 0q4 6 1 10-2 2-5 2Q0 10 1 5l2 2q2-3 4-7z" fill="#fff" /><path d="M1 15l5-7" stroke="#1c1c1c" strokeWidth="1" /></svg></TraySlot>
          <Clock><span>16:20</span><span>07/04/2022</span></Clock>
        </Tray>
      </Taskbar>
    </Screen>
  );
}
